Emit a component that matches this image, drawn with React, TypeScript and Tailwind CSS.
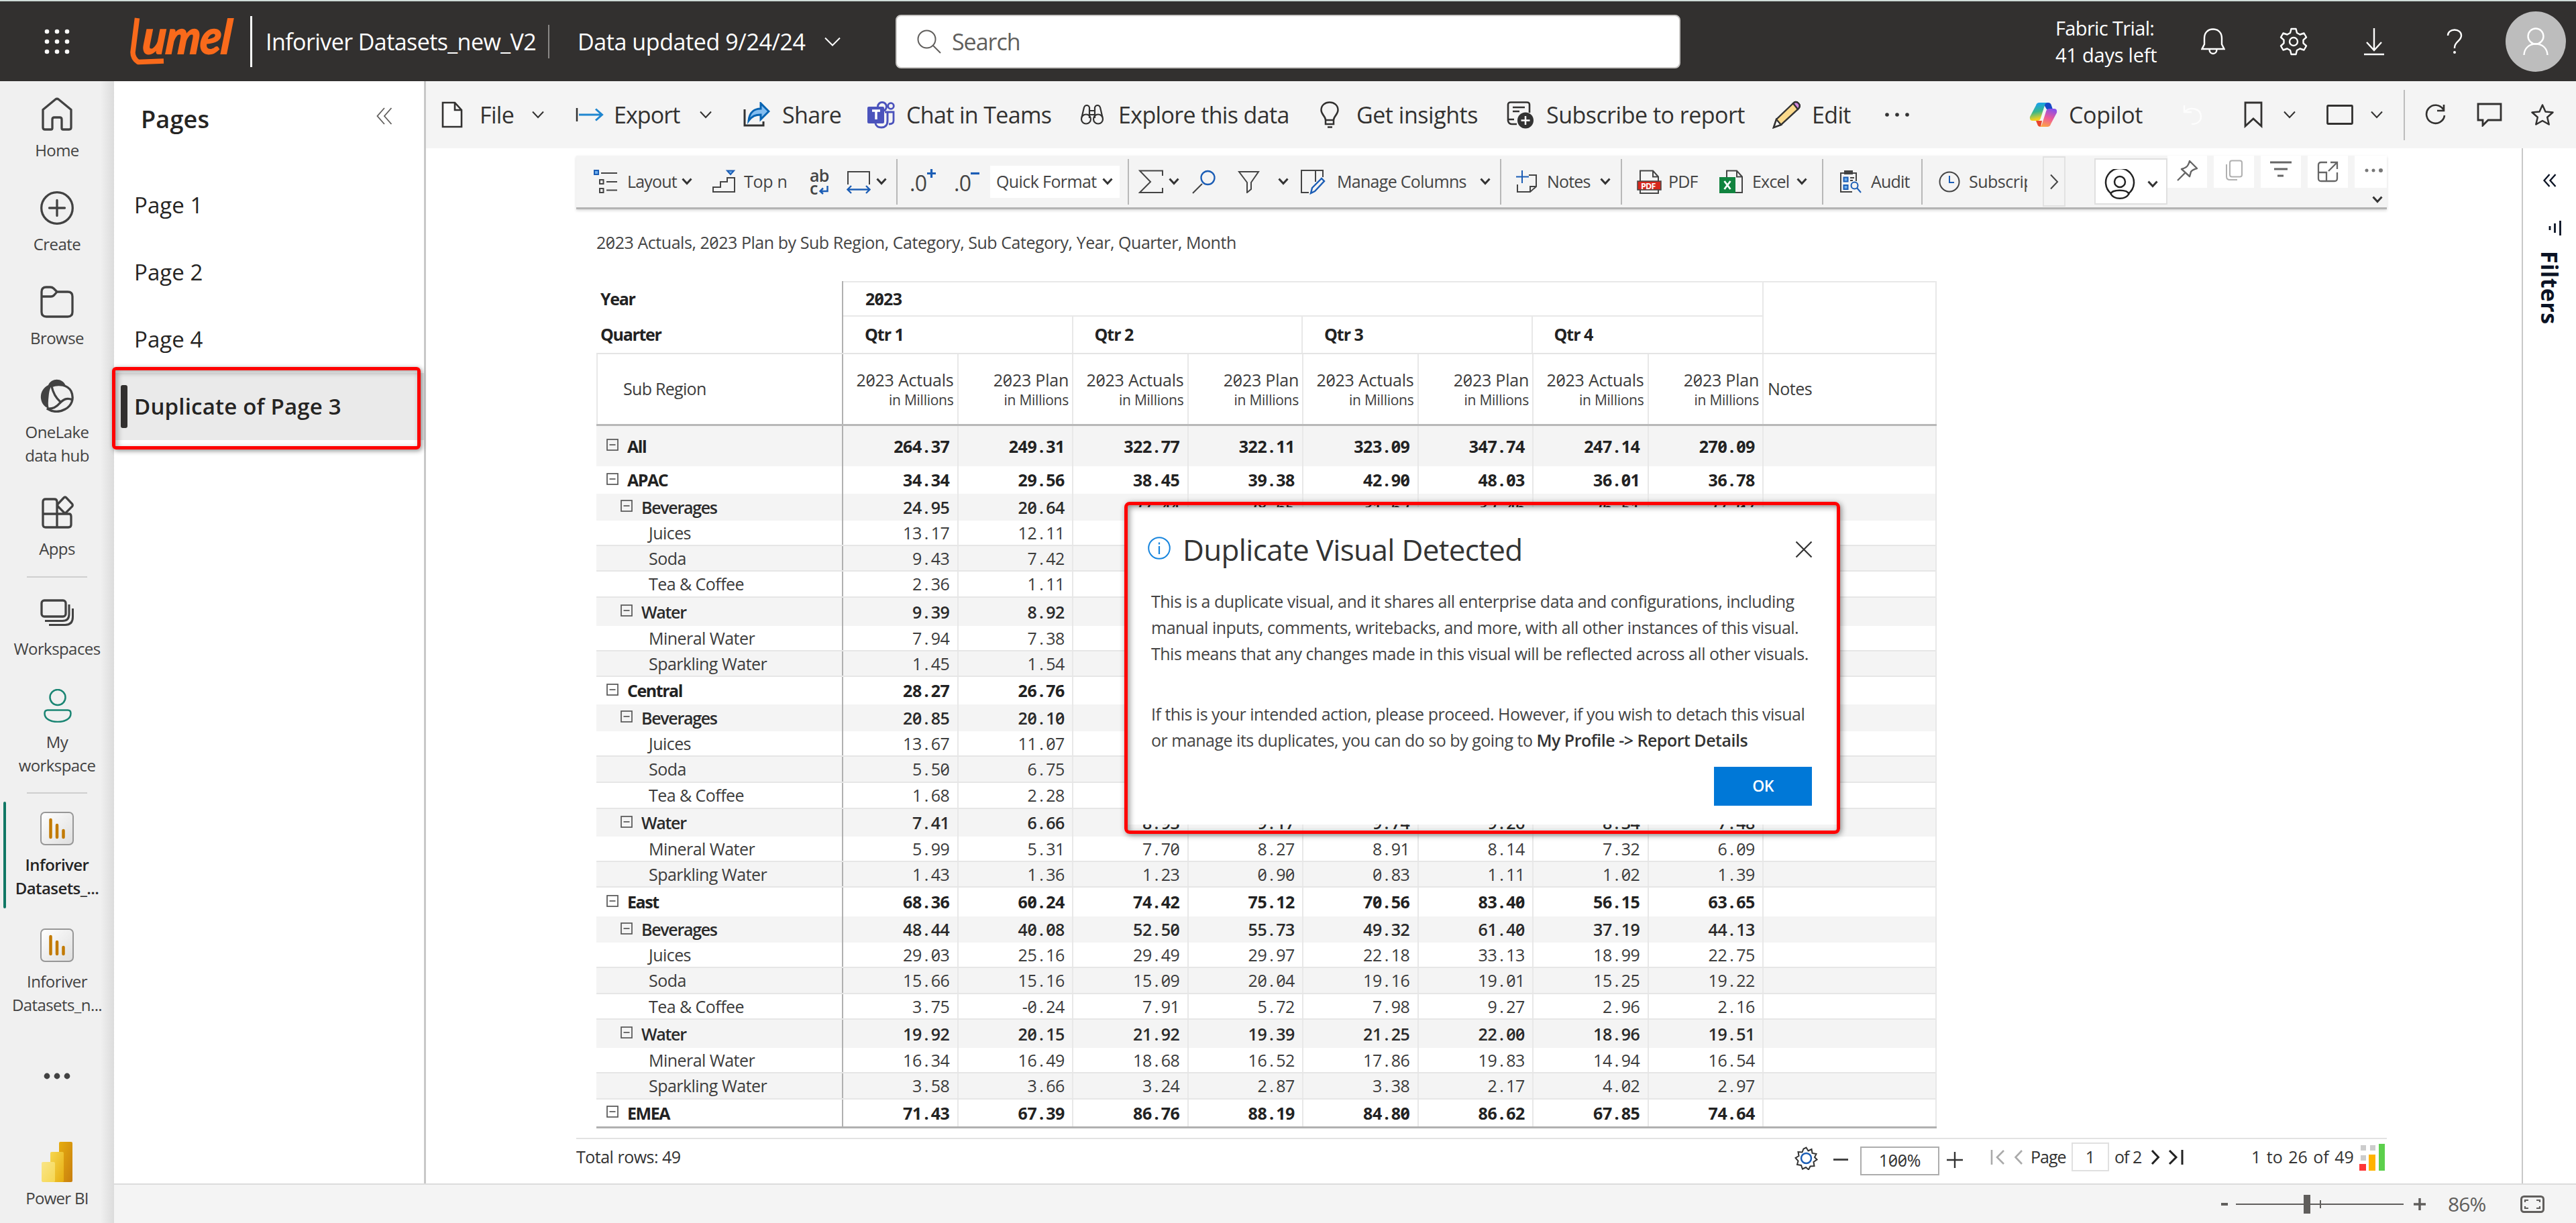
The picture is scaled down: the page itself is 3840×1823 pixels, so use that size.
import type { ReactNode } from "react";

type Kids = { children?: ReactNode };

function Svg({ w, h, className = "", children }: { w: number; h: number; className?: string } & Kids) {
  return (
    <svg
      width={w}
      height={h}
      viewBox={`0 0 ${w} ${h}`}
      fill="none"
      stroke="currentColor"
      strokeWidth={2}
      className={`shrink-0 ${className}`}
    >
      {children}
    </svg>
  );
}

const ChevThin = ({ className = "" }: { className?: string }) => (
  <Svg w={18} h={12} className={className}>
    <path d="M1 1.5l8 8.5 8-8.5" />
  </Svg>
);
const ChevBold = ({ className = "" }: { className?: string }) => (
  <Svg w={16} h={11} className={`text-[#333] ${className}`}>
    <path d="M1.500 1.500L8 8.500l6.500-7" strokeWidth={3} />
  </Svg>
);
const Divider = ({ className = "" }: { className?: string }) => (
  <div className={`h-[68px] w-[2px] shrink-0 bg-[#b8b8b8] ${className}`} />
);
const Label = ({ className = "", children }: { className?: string } & Kids) => (
  <span className={`shrink-0 whitespace-nowrap ${className}`}>{children}</span>
);

/* ---------- top bar ---------- */

function LumelLogo() {
  return (
    <svg width={164} height={84} viewBox="0 0 164 84" className="ml-[89px] shrink-0 overflow-visible">
      <g fill="#f96a1b" stroke="#f96a1b">
        <path d="M11.500 7L5 58q0 9 8 14.500l38-1.500" fill="none" strokeWidth="7.500" strokeLinejoin="round" />
        <text
          transform="translate(18 60) skewX(-5)"
          fontFamily="Lato"
          fontStyle="italic"
          fontWeight="700"
          fontSize="70"
          textLength="132"
          lengthAdjust="spacingAndGlyphs"
          strokeWidth="1.800"
        >
          umel
        </text>
      </g>
    </svg>
  );
}

function TopBar() {
  return (
    <header className="flex h-[121px] shrink-0 items-center border-t-2 border-[#cfdcd8] bg-[#32302f] text-[34px] tracking-[-0.017em] text-white">
      <Svg w={38} h={38} className="ml-[66px]">
        <g fill="white" stroke="none">
          {[4, 19, 34].map((y) => [4, 19, 34].map((x) => <circle key={`${x}-${y}`} cx={x} cy={y} r={3.3} />))}
        </g>
      </Svg>
      <LumelLogo />
      <div className="ml-[16px] h-[76px] w-[3px] bg-white" />
      <Label className="mt-[2px] ml-[20px] w-[405px]">Inforiver Datasets_new_V2</Label>
      <div className="ml-[16px] h-[50px] w-[2px] bg-[#8a8886]" />
      <Label className="mt-[2px] ml-[42px] w-[346px] tracking-[-0.012em]">Data updated 9/24/24</Label>
      <Svg w={24} h={14} className="ml-[22px]">
        <path d="M1 1.500l11 11 11-11" />
      </Svg>
      <div className="ml-[82px] flex h-[80px] w-[1170px] items-center rounded-[8px] border-2 border-[#c8c6c4] bg-white text-[#605e5c]">
        <Svg w={36} h={36} className="ml-[30px]">
          <circle cx={14.500} cy={14.500} r={13} />
          <path d="M24 24l11 11" />
        </Svg>
        <Label className="mt-[2px] ml-[16px] tracking-[-0.03em]">Search</Label>
      </div>
      <div className="ml-[559px] w-[165px] whitespace-nowrap text-[29px] leading-[40px] tracking-[-0.022em]">
        Fabric Trial:
        <br />
        <span className="tracking-[-0.008em]">41 days left</span>
      </div>
      <Svg w={36} h={40} className="ml-[52px]">
        <path
          d="M18 1.500C10 1.500 5 7 5 15v9L1.500 31h33L31 24v-9C31 7 26 1.500 18 1.500zM12.500 31.500c0 4 2.500 6.500 5.500 6.500s5.500-2.500 5.500-6.500"
          strokeWidth={2.400}
        />
      </Svg>
      <Svg w={42} h={42} className="ml-[81px]">
        <path
          d="M17.500 2h7l1.500 6 4.500 2.500 6-2 3.500 6-4.500 4.200v4.600l4.500 4.200-3.500 6-6-2L26 34l-1.500 6h-7L16 34l-4.500-2.500-6 2-3.500-6 4.500-4.200v-4.600L2 14.500l3.500-6 6 2L16 8z"
          strokeWidth={2.400}
          strokeLinejoin="round"
        />
        <circle cx={21} cy={21} r={6} strokeWidth={2.400} />
      </Svg>
      <Svg w={32} h={42} className="ml-[83px]">
        <path d="M16 1v32M5 22l11 12 11-12M1 40h30" strokeWidth={2.400} />
      </Svg>
      <Svg w={24} h={38} className="ml-[92px]">
        <path d="M2 10C2 5 6 1.500 12 1.500S22 5 22 10c0 8-10 9-10 18v1" strokeWidth={2.400} />
        <circle cx={12} cy={35} r={2} fill="white" stroke="none" />
      </Svg>
      <div className="ml-[64px] flex size-[90px] items-center justify-center rounded-full bg-[#bdbdbd]">
        <Svg w={38} h={42}>
          <circle cx={19} cy={13} r={11.500} strokeWidth={2.400} />
          <path d="M1.500 41C2 31 9 24.500 19 24.500S36 31 36.500 41" strokeWidth={2.400} />
        </Svg>
      </div>
    </header>
  );
}

/* ---------- left navigation ---------- */

function NavItem({ icon, lines, className = "", text = "" }: { icon: ReactNode; lines: string[]; className?: string; text?: string }) {
  return (
    <div className={`flex w-[170px] flex-col items-center ${className}`}>
      <div className="mb-[11px] flex h-[50px] items-center justify-center">{icon}</div>
      {lines.map((l) => (
        <div key={l} className={`whitespace-nowrap text-[24px] leading-[35px] tracking-[-0.024em] ${text}`}>
          {l}
        </div>
      ))}
    </div>
  );
}

function ReportIcon({ id }: { id: string }) {
  return (
    <Svg w={50} h={50}>
      <defs>
        <linearGradient id={id} x1="0" y1="0" x2="1" y2="1">
          <stop offset="0" stopColor="#ffffff" />
          <stop offset="1" stopColor="#dedede" />
        </linearGradient>
      </defs>
      <rect x={1} y={1} width={48} height={48} rx={6} fill={`url(#${id})`} stroke="#979797" />
      <path d="M15.500 12v26M25 20v18M34.500 28v10" stroke="#c27a00" strokeWidth={4.500} strokeLinecap="round" />
    </Svg>
  );
}

function NavRail() {
  return (
    <nav className="flex w-[170px] shrink-0 flex-col items-center bg-gradient-to-r from-[#f0f0f0] from-88% to-[#dcdcdc] text-[#424242]">
      <NavItem
        className="mt-[24px]"
        lines={["Home"]}
        icon={
          <Svg w={46} h={50}>
            <path
              d="M2 18.500L20.500 3.200q2.500-2 5 0L44 18.500V45q0 3-3 3H32q-2 0-2-2V33q0-3-3-3h-8q-3 0-3 3v13q0 2-2 2H5q-3 0-3-3z"
              strokeWidth={3.300}
              strokeLinejoin="round"
            />
          </Svg>
        }
      />
      <NavItem
        className="mt-[44px]"
        lines={["Create"]}
        icon={
          <Svg w={50} h={50}>
            <circle cx={25} cy={25} r={23.300} strokeWidth={3.300} />
            <path d="M25 13.500v23M13.500 25h23" strokeWidth={3.300} strokeLinecap="round" />
          </Svg>
        }
      />
      <NavItem
        className="mt-[44px]"
        lines={["Browse"]}
        icon={
          <Svg w={50} h={48}>
            <path
              d="M2 9q0-7 7-7h6q3 0 5 2l5 5h16q7 0 7 7v23q0 7-7 7H9q-7 0-7-7zM2 16h14q2.500 0 4-1.500L25 9"
              strokeWidth={3.300}
            />
          </Svg>
        }
      />
      <NavItem
        className="mt-[44px]"
        lines={["OneLake", "data hub"]}
        icon={
          <Svg w={50} h={50}>
            <path
              d="M12 9C4 13 0 21 1 29c1 8 6 13 12 15-2-6-1-12-.500-18C13 20 14 14 17 10c8-3 15-2 21 0C33-2 17-2 12 9z"
              fill="currentColor"
              stroke="none"
            />
            <path
              d="M16 11C28 6 41 9 46 18c5 11 1 22-9 27-9 5-19 4-27-1 8 1 14-2 19-8 5-5 10-9 19-5M17 11c2 9 6 17 13 23"
              strokeWidth={3.300}
            />
          </Svg>
        }
      />
      <NavItem
        className="mt-[43px]"
        lines={["Apps"]}
        icon={
          <Svg w={50} h={50}>
            <path
              d="M4 28V9q0-4 4-4h13q4 0 4 4v38M4 27h39q3 0 3 4v12q0 4-4 4H8q-4 0-4-4V27M35.500 2.500L26.500 12q-1.500 2 0 4l9 9q1.500 1 3 0l9-9q1.500-2 0-4l-9-9.500q-1.500-1-3 0z"
              strokeWidth={3.300}
            />
          </Svg>
        }
      />
      <div className="mt-[24px] h-[2px] w-[90px] bg-[#cfcfcf]" />
      <NavItem
        className="mt-[27px]"
        lines={["Workspaces"]}
        icon={
          <Svg w={50} h={44}>
            <rect x={2} y={4} width={36} height={24} rx={4} strokeWidth={3.300} />
            <path d="M7 34.500h26q10 0 10-10V10M13 40.500h24q11.500 0 11.500-12V16" strokeWidth={3} />
          </Svg>
        }
      />
      <NavItem
        className="mt-[43px]"
        lines={["My", "workspace"]}
        icon={
          <Svg w={42} h={50} className="ml-[2px] text-[#1a8573]">
            <circle cx={21} cy={12.500} r={11.500} strokeWidth={2.500} />
            <path d="M6 31.500h30q4.500 0 4.500 5C40.500 45 31 49 21 49S1.500 45 1.500 36.500q0-5 4.500-5z" strokeWidth={2.500} />
          </Svg>
        }
      />
      <div className="mt-[23px] h-[2px] w-[90px] bg-[#cfcfcf]" />
      <div className="mt-[12px] flex h-[159px] w-[170px] pl-[5px]">
        <div className="h-full w-[4px] shrink-0 rounded-full bg-[#117865]" />
        <NavItem
          className="-ml-[9px] pt-[15px]"
          text="font-semibold text-[#242424]"
          lines={["Inforiver", "Datasets_..."]}
          icon={<ReportIcon id="report-a" />}
        />
      </div>
      <NavItem className="mt-[30px]" lines={["Inforiver", "Datasets_n..."]} icon={<ReportIcon id="report-b" />} />
      <Svg w={40} h={10} className="mt-[84px]">
        <g fill="currentColor" stroke="none">
          <circle cx={5} cy={5} r={4.400} />
          <circle cx={20} cy={5} r={4.400} />
          <circle cx={35} cy={5} r={4.400} />
        </g>
      </Svg>
      <div className="mt-[93px] flex flex-col items-center">
        <Svg w={46} h={62}>
          <defs>
            <linearGradient id="pb1" x1="0" y1="0" x2="1" y2="1">
              <stop stopColor="#e6ad10" />
              <stop offset="1" stopColor="#c87e0e" />
            </linearGradient>
            <linearGradient id="pb2" x1="0" y1="0" x2="1" y2="1">
              <stop stopColor="#f6d751" />
              <stop offset="1" stopColor="#e6ad10" />
            </linearGradient>
            <linearGradient id="pb3" x1="0" y1="0" x2="1" y2="1">
              <stop stopColor="#f9e589" />
              <stop offset="1" stopColor="#f6d751" />
            </linearGradient>
          </defs>
          <g stroke="none">
            <rect x={26} y={0} width={20} height={60} rx={2} fill="url(#pb1)" />
            <rect x={13} y={15} width={20} height={45} rx={2} fill="url(#pb2)" />
            <rect x={0} y={30} width={20} height={30} rx={2} fill="url(#pb3)" />
          </g>
        </Svg>
        <div className="mt-[4px] whitespace-nowrap text-[24px] leading-[35px] tracking-[-0.03em]">Power BI</div>
      </div>
    </nav>
  );
}

/* ---------- pages pane ---------- */

function PagesPane() {
  return (
    <aside className="flex w-[465px] shrink-0 flex-col border-r-[3px] border-[#c8c8c8] bg-white text-[#252423]">
      <div className="flex items-start pt-[32px]">
        <h2 className="ml-[40px] h-[50px] w-[104px] text-[36px] leading-[50px] font-semibold tracking-[0.006em]">Pages</h2>
        <Svg w={24} h={26} className="mt-[7px] ml-[247px] text-[#605e5c]">
          <path d="M12 1L1.500 13 12 25M22.500 1L12 13l10.500 12" strokeWidth={1.800} />
        </Svg>
      </div>
      <div className="mt-[53px] flex flex-col">
        {["Page 1", "Page 2", "Page 4"].map((p) => (
          <div key={p} className="flex h-[100px] items-center pb-[1px] pl-[30px] text-[33px] tracking-[0.002em]">
            {p}
          </div>
        ))}
        <div className="relative flex h-[100px] items-center bg-[#eaeaea] text-[33px] font-semibold">
          <div className="ml-[10px] h-[64px] w-[10px] rounded-[3px] bg-[#32302f]" />
          <div className="ml-[10px] whitespace-nowrap tracking-[0.006em]">Duplicate of Page 3</div>
          <div className="absolute -top-[9px] -left-[3px] h-[123px] w-[460px] rounded-[6px] border-[5px] border-[#ff0000] shadow-[2px_2px_7px_rgba(0,0,0,0.45),inset_3px_3px_8px_rgba(0,0,0,0.35)]" />
        </div>
      </div>
    </aside>
  );
}

/* ---------- command bar ---------- */

function CommandBar() {
  return (
    <div className="flex h-[100px] shrink-0 items-center bg-[#f4f4f4] text-[34px] tracking-[-0.019em] text-[#323130]">
      <Svg w={32} h={40} className="ml-[23px]">
        <path d="M2 2h18l10 11v25H2zM20 2v11h10" strokeWidth={2.600} fill="#fafafa" />
      </Svg>
      <Label className="ml-[25px] w-[54px]">File</Label>
      <ChevThin className="ml-[24px]" />
      <Svg w={42} h={20} className="ml-[47px]">
        <path d="M2 0v20" strokeWidth={2.500} />
        <path d="M5 10h34M30 1.500l9.500 8.500-9.500 8.500" stroke="#1f86cf" strokeWidth={3} />
      </Svg>
      <Label className="ml-[15px] w-[104px] tracking-[-0.027em]">Export</Label>
      <ChevThin className="ml-[24px]" />
      <Svg w={40} h={38} className="ml-[47px]">
        <path d="M2 11v24h28v-6" strokeWidth={3} stroke="#333" />
        <path d="M8 28C9 15 17 10 26 10V2l12 12-12 12v-7c-8 0-13 2-18 9z" fill="#83bdf0" stroke="#0763b1" strokeWidth={3} />
      </Svg>
      <Label className="ml-[18px] w-[88px]">Share</Label>
      <Svg w={41} h={41} className="ml-[39px] text-[#4b53bc]">
        <circle cx={22} cy={8} r={6.500} strokeWidth={3} />
        <circle cx={35} cy={7} r={4.300} strokeWidth={2.800} />
        <path d="M26 16h13v13q0 5-7 5" strokeWidth={2.800} />
        <path d="M30 16v13c0 7-4 10-9 10s-8-2-9-6" strokeWidth={3} />
        <rect x={0} y={8} width={25} height={25} rx={2} fill="currentColor" stroke="none" />
        <path d="M7 14h12M13 14v13" stroke="white" strokeWidth={3.500} />
      </Svg>
      <Label className="ml-[17px] w-[216px]">Chat in Teams</Label>
      <Svg w={34} h={30} className="ml-[44px]">
        <g strokeWidth={2.200}>
          <circle cx={8} cy={21.500} r={7} />
          <circle cx={26} cy={21.500} r={7} />
          <path d="M1.500 19L5 4q1-3 4-3t4 3v16M32.500 19L29 4q-1-3-4-3t-4 3v16M13 9h8M13 15h8" />
        </g>
      </Svg>
      <Label className="ml-[22px] w-[258px]">Explore this data</Label>
      <Svg w={28} h={40} className="ml-[43px]">
        <path d="M8 28C8 22 1.500 20 1.500 13 1.500 6 7 1.500 14 1.500S26.500 6 26.500 13c0 7-6.500 9-6.500 15zM8 28v6h12v-6M11 38.500h7" strokeWidth={2.500} />
      </Svg>
      <Label className="ml-[26px] w-[184px] tracking-[-0.014em]">Get insights</Label>
      <Svg w={41} h={41} className="ml-[40px]">
        <path d="M15 34H8q-5 0-6-5V5q0-3.500 4-3.500h24q4 0 4 3.500v12M9 9h18M9 15h10M2 27h9" strokeWidth={2.600} />
        <circle cx={28} cy={28.500} r={12} fill="#333" stroke="none" />
        <path d="M28 22v13M21.500 28.500h13" stroke="white" strokeWidth={2.500} />
      </Svg>
      <Label className="ml-[18px] w-[300px] tracking-[-0.015em]">Subscribe to report</Label>
      <Svg w={42} h={42} className="ml-[37px]">
        <path d="M2 40l4-12L31 4q4-4 8 0t-1 9L13 36z" fill="#fbd98b" strokeWidth={2.400} stroke="#333" />
        <path d="M31 4q4-4 8 0t-1 9z" fill="#d58ae0" stroke="#333" strokeWidth={2.400} />
        <path d="M2 40l4-12 7 8z" fill="#fff" stroke="#333" strokeWidth={2.400} />
      </Svg>
      <Label className="ml-[17px] w-[60px]">Edit</Label>
      <Svg w={38} h={8} className="ml-[48px]">
        <g fill="#333" stroke="none">
          <circle cx={4} cy={4} r={2.800} />
          <circle cx={19} cy={4} r={2.800} />
          <circle cx={34} cy={4} r={2.800} />
        </g>
      </Svg>
      <Svg w={42} h={38} className="ml-[178px]">
        <defs>
          <linearGradient id="cp1" x1="0" y1="0" x2="0.200" y2="1">
            <stop offset="0.100" stopColor="#18a0f0" />
            <stop offset="0.550" stopColor="#38b68c" />
            <stop offset="0.950" stopColor="#f0d020" />
          </linearGradient>
          <linearGradient id="cp2" x1="0.600" y1="0" x2="0.300" y2="1">
            <stop stopColor="#8a50e8" />
            <stop offset="0.500" stopColor="#ee5a98" />
            <stop offset="1" stopColor="#fda544" />
          </linearGradient>
        </defs>
        <g stroke="none">
          <path d="M20 1h8q4 0 5 4l2 6h-9z" fill="#1848c8" />
          <path d="M10 5q1-4 5-4h13q-4 0-5 4l-6 19q-1 4-5 4H5q-5 0-4-6z" fill="url(#cp1)" />
          <path d="M10 28h9l-2 9q-4 0-5-4z" fill="#e8452c" />
          <path d="M32 33q-1 4-5 4H14q4 0 5-4l6-19q1-4 5-4h7q5 0 4 6z" fill="url(#cp2)" />
        </g>
      </Svg>
      <Label className="ml-[17px] w-[116px] tracking-[-0.010em]">Copilot</Label>
      <Svg w={30} h={30} className="ml-[53px] text-[#fdfdfd]">
        <path d="M3 1v10h11M4 10C12 3 28 5 28 18c0 7-6 11-14 11" strokeWidth={2.400} />
      </Svg>
      <Svg w={28} h={40} className="ml-[62px]">
        <path d="M2 2h24v35l-12-11L2 37z" strokeWidth={2.800} />
      </Svg>
      <ChevThin className="ml-[31px]" />
      <Svg w={40} h={30} className="ml-[46px]">
        <rect x={1.500} y={1.500} width={37} height={27} rx={1} strokeWidth={2.800} />
      </Svg>
      <ChevThin className="ml-[26px]" />
      <div className="ml-[31px] h-[75px] w-[2px] bg-[#bdbdbd]" />
      <Svg w={32} h={32} className="ml-[29px]">
        <path d="M28 8a13.500 13.500 0 1 0 2 9M29 1v9H19" strokeWidth={2.600} />
      </Svg>
      <Svg w={38} h={36} className="ml-[46px]">
        <path d="M2 2h34v24H17l-8 8v-8H2z" strokeWidth={2.800} />
      </Svg>
      <Svg w={34} h={34} className="ml-[43px]">
        <path d="M17 2.500l4.500 10 11 1-8.300 7.300 2.500 10.700L17 26l-9.700 5.500 2.500-10.700L1.500 13.500l11-1z" strokeWidth={2.500} strokeLinejoin="round" />
      </Svg>
    </div>
  );
}

/* ---------- visual toolbar ---------- */

const BLUE = "#1b5db5";

function VisualToolbar() {
  return (
    <div className="flex h-[80px] w-[2699px] shrink-0 items-center border-b-[3px] border-[#b4b4b4] bg-[#f4f4f4] text-[25px] tracking-[-0.032em] text-[#444] shadow-[0_2px_4px_rgba(0,0,0,0.15)]">
      <Svg w={36} h={36} className="ml-[26px]">
        <rect x={1} y={1} width={6} height={6} fill="#6fb0ee" stroke={BLUE} />
        <path d="M11 5h24M19 18h16M19 30.500h16" />
        <rect x={9} y={15} width={5.500} height={6} />
        <rect x={9} y={28} width={5.500} height={6} />
      </Svg>
      <Label className="ml-[14px] w-[77px]">Layout</Label>
      <ChevBold className="ml-[4px]" />
      <Svg w={35} h={36} className="ml-[30px]">
        <path d="M1 33v-7h11v-8h10v-6h11v21z" />
        <path d="M22 1.500h10l-5 5.500z" stroke={BLUE} fill="#6fb0ee" />
      </Svg>
      <Label className="ml-[12px] w-[64px] tracking-[-0.010em]">Top n</Label>
      <div className="ml-[34px] w-[29px] text-[25px] leading-[19px] font-semibold">
        ab
        <div className="flex items-end">
          c
          <Svg w={14} h={13} className="ml-[2px]">
            <path d="M12.500 0v8H2M6 3.500L1.500 8 6 12" stroke={BLUE} strokeWidth={2.500} />
          </Svg>
        </div>
      </div>
      <Svg w={36} h={36} className="ml-[26px]">
        <path d="M2 22V3h32v19" />
        <path d="M3 29.500h30M7 24l-5.500 5.500L7 35M29 24l5.500 5.500L29 35" stroke={BLUE} strokeWidth={2.300} />
      </Svg>
      <ChevBold className="ml-[8px]" />
      <Divider className="ml-[14px]" />
      <div className="ml-[18px] flex w-[40px] items-start text-[32px] leading-[36px]">
        <span className="pt-[4px] tracking-[-0.020em]">.0</span>
        <Svg w={15} h={16}>
          <path d="M7.500 1v13M1 7.500h13" stroke={BLUE} strokeWidth={3.200} />
        </Svg>
      </div>
      <div className="ml-[26px] flex w-[40px] items-start text-[32px] leading-[36px]">
        <span className="pt-[4px] tracking-[-0.020em]">.0</span>
        <Svg w={13} h={16}>
          <path d="M0 7.500h13" stroke={BLUE} strokeWidth={3.200} />
        </Svg>
      </div>
      <div className="ml-[14px] flex h-[48px] w-[193px] items-center bg-white">
        <Label className="ml-[9px] w-[152px] tracking-[-0.024em]">Quick Format</Label>
        <ChevBold className="ml-[6px]" />
      </div>
      <Divider className="ml-[12px]" />
      <Svg w={38} h={36} className="ml-[14px]">
        <path d="M36 9V1.500H2L18 18 2 34h34v-7" />
      </Svg>
      <ChevBold className="ml-[7px]" />
      <Svg w={36} h={36} className="ml-[19px]">
        <path d="M15 21L1 35" />
        <circle cx={23.500} cy={12} r={10} stroke={BLUE} strokeWidth={2.300} />
      </Svg>
      <Svg w={33} h={34} className="ml-[32px]">
        <path d="M2 2h29L20 18v10l-6 5V18z" />
      </Svg>
      <ChevBold className="ml-[27px]" />
      <Svg w={38} h={38} className="ml-[17px]">
        <path d="M13 35H2V2h32v10M23 2v17" />
        <path d="M16 36l2-8L32 14l4 4-14 15z" stroke={BLUE} strokeWidth={2.400} />
      </Svg>
      <Label className="ml-[17px] w-[197px] tracking-[-0.028em]">Manage Columns</Label>
      <ChevBold className="ml-[16px]" />
      <Divider className="ml-[14px]" />
      <Svg w={32} h={34} className="ml-[22px]">
        <path d="M2 21v11h19l9-8V7H19M21 32v-8h9" />
        <path d="M9 0v19M0 9.500h19" stroke={BLUE} />
      </Svg>
      <Label className="ml-[14px] w-[68px]">Notes</Label>
      <ChevBold className="ml-[11px]" />
      <Divider className="ml-[15px]" />
      <Svg w={38} h={36} className="ml-[22px]">
        <path d="M5 35V1.500h19l8 9V35zM24 1.500v9h8" />
        <rect x={1} y={17} width={35} height={13} fill="#d6281d" strokeWidth={1.500} />
        <text x={6} y={28.500} fontSize={12.500} fontWeight={700} fontFamily="Open Sans" fill="white" stroke="none">
          PDF
        </text>
      </Svg>
      <Label className="ml-[9px] w-[46px]">PDF</Label>
      <Svg w={36} h={36} className="ml-[30px]">
        <path d="M11 12V1.500h15l8 9V34H22M26 1.500v9h8" />
        <rect x={0} y={11} width={24} height={24} fill="#11833f" stroke="none" />
        <path d="M7.500 17l9 12M16.500 17l-9 12" stroke="white" strokeWidth={2.800} />
      </Svg>
      <Label className="ml-[13px] w-[60px]">Excel</Label>
      <ChevBold className="ml-[6px]" />
      <Divider className="ml-[22px]" />
      <Svg w={33} h={34} className="ml-[24px]">
        <path d="M8 4H2v28h17M19 4h6v12" />
        <rect x={8} y={1} width={11} height={4} fill="#444" />
        <rect x={6.500} y={10.500} width={6} height={6} fill="#6fb0ee" stroke={BLUE} />
        <rect x={6.500} y={22} width={6} height={6} fill="#6fb0ee" stroke={BLUE} />
        <path d="M16 11h6M16 15h4" />
        <circle cx={22.500} cy={22.500} r={5} stroke={BLUE} />
        <path d="M26 26l6 7" stroke={BLUE} />
      </Svg>
      <Label className="ml-[14px] w-[62px]">Audit</Label>
      <Divider className="ml-[13px]" />
      <Svg w={32} h={32} className="ml-[24px]">
        <circle cx={16} cy={16} r={14.500} />
        <path d="M16 7v10h7" stroke={BLUE} />
      </Svg>
      <div className="ml-[13px] w-[87px] overflow-hidden whitespace-nowrap tracking-[-0.020em]">Subscription</div>
      <div className="ml-[23px] flex h-[75px] w-[34px] items-center justify-center border-2 border-[#e2e2e2]">
        <Svg w={14} h={24}>
          <path d="M2 1.500L12 12 2 22.500" />
        </Svg>
      </div>
      <div className="ml-[43px] flex h-[69px] w-[109px] items-center border-2 border-[#e0e0e0] bg-white">
        <Svg w={46} h={46} className="mt-[8px] ml-[13px] text-[#222]">
          <path d="M10 36.500A21 21 0 1 1 36 36.500" strokeWidth={2.500} />
          <circle cx={23} cy={19} r={8} strokeWidth={2.500} />
          <path d="M9.500 37C11 30 34 30 36.500 37c-5 9-22 9-27 0z" strokeWidth={2.500} />
        </Svg>
        <ChevBold className="mt-[8px] ml-[18px]" />
      </div>
      <div className="flex h-full w-[327px] flex-col">
        <div className="flex h-[48px] gap-[10px] text-[#666]">
          <div className="flex w-[59px] items-center justify-center bg-white">
            <Svg w={32} h={32} className="-mt-[4px]">
              <path d="M19 2l11 11q-7 2-9 5-1 4-2 7L7 14q4-1 7-3 3-2 5-9zM12 20L1 31" strokeWidth={2.400} strokeLinejoin="round" />
            </Svg>
          </div>
          <div className="flex w-[60px] items-center justify-center bg-white text-[#b0b0b0]">
            <Svg w={28} h={32} className="-mt-[4px]">
              <rect x={8} y={1.500} width={18} height={24} rx={3} />
              <path d="M3 7v18q0 5 5 5h11" />
            </Svg>
          </div>
          <div className="flex w-[60px] items-center justify-center bg-white">
            <Svg w={32} h={24} className="-mt-[8px]">
              <path d="M0 2h32M6 12h20M11 22h9" strokeWidth={2.800} />
            </Svg>
          </div>
          <div className="flex w-[60px] items-center justify-center bg-white">
            <Svg w={32} h={32}>
              <path d="M15 2H6Q2 2 2 6v20q0 4 4 4h20q4 0 4-4v-9M20 2h10v10M30 2L17 15M2 17h12v13" strokeWidth={2.300} />
            </Svg>
          </div>
          <div className="flex flex-1 items-center justify-start bg-white">
            <Svg w={30} h={8} className="-mt-[4px] ml-[14px]">
              <g fill="#777" stroke="none">
                <circle cx={4} cy={4} r={2.500} />
                <circle cx={14} cy={4} r={2.500} />
                <circle cx={25} cy={4} r={3} />
              </g>
            </Svg>
          </div>
        </div>
        <div className="flex flex-1 items-center justify-end pt-[6px] pr-[6px]">
          <ChevBold />
        </div>
      </div>
    </div>
  );
}

/* ---------- data grid ---------- */

type Row = { label: string; level: 0 | 1 | 2; h: string; gray?: boolean; v: string };

const ROWS: Row[] = [
  { label: "All", level: 0, h: "h-[60px]", gray: true, v: "264.37 249.31 322.77 322.11 323.09 347.74 247.14 270.09" },
  { label: "APAC", level: 0, h: "h-[41px]", v: "34.34 29.56 38.45 39.38 42.90 48.03 36.01 36.78" },
  { label: "Beverages", level: 1, h: "h-[40px]", gray: true, v: "24.95 20.64 27.44 28.65 31.62 32.46 26.51 27.07" },
  { label: "Juices", level: 2, h: "h-[38px]", v: "13.17 12.11" },
  { label: "Soda", level: 2, h: "h-[38px]", gray: true, v: "9.43 7.42" },
  { label: "Tea & Coffee", level: 2, h: "h-[39px]", v: "2.36 1.11" },
  { label: "Water", level: 1, h: "h-[42px]", gray: true, v: "9.39 8.92" },
  { label: "Mineral Water", level: 2, h: "h-[38px]", v: "7.94 7.38" },
  { label: "Sparkling Water", level: 2, h: "h-[38px]", gray: true, v: "1.45 1.54" },
  { label: "Central", level: 0, h: "h-[41px]", v: "28.27 26.76" },
  { label: "Beverages", level: 1, h: "h-[40px]", gray: true, v: "20.85 20.10" },
  { label: "Juices", level: 2, h: "h-[38px]", v: "13.67 11.07" },
  { label: "Soda", level: 2, h: "h-[39px]", gray: true, v: "5.50 6.75" },
  { label: "Tea & Coffee", level: 2, h: "h-[39px]", v: "1.68 2.28" },
  { label: "Water", level: 1, h: "h-[41px]", gray: true, v: "7.41 6.66 8.93 9.17 9.74 9.26 8.34 7.48" },
  { label: "Mineral Water", level: 2, h: "h-[38px]", v: "5.99 5.31 7.70 8.27 8.91 8.14 7.32 6.09" },
  { label: "Sparkling Water", level: 2, h: "h-[38px]", gray: true, v: "1.43 1.36 1.23 0.90 0.83 1.11 1.02 1.39" },
  { label: "East", level: 0, h: "h-[43px]", v: "68.36 60.24 74.42 75.12 70.56 83.40 56.15 63.65" },
  { label: "Beverages", level: 1, h: "h-[39px]", gray: true, v: "48.44 40.08 52.50 55.73 49.32 61.40 37.19 44.13" },
  { label: "Juices", level: 2, h: "h-[38px]", v: "29.03 25.16 29.49 29.97 22.18 33.13 18.99 22.75" },
  { label: "Soda", level: 2, h: "h-[39px]", gray: true, v: "15.66 15.16 15.09 20.04 19.16 19.01 15.25 19.22" },
  { label: "Tea & Coffee", level: 2, h: "h-[38px]", v: "3.75 -0.24 7.91 5.72 7.98 9.27 2.96 2.16" },
  { label: "Water", level: 1, h: "h-[42px]", gray: true, v: "19.92 20.15 21.92 19.39 21.25 22.00 18.96 19.51" },
  { label: "Mineral Water", level: 2, h: "h-[38px]", v: "16.34 16.49 18.68 16.52 17.86 19.83 14.94 16.54" },
  { label: "Sparkling Water", level: 2, h: "h-[39px]", gray: true, v: "3.58 3.66 3.24 2.87 3.38 2.17 4.02 2.97" },
  { label: "EMEA", level: 0, h: "h-[40px]", v: "71.43 67.39 86.76 88.19 84.80 86.62 67.85 74.64" },
];

const COLS = [0, 1, 2, 3, 4, 5, 6, 7];

function Num({ value }: { value?: string }) {
  if (!value) return null;
  const [a, b] = value.split(".");
  return (
    <span className="tracking-[-0.400px]">
      {a}
      <span className="inline-block w-[13.900px] text-center">.</span>
      {b}
    </span>
  );
}

const Toggle = () => (
  <Svg w={18} h={18} className="-mt-[5px] text-[#555]">
    <rect x={1} y={1} width={16} height={16} strokeWidth={1.700} />
    <path d="M4.500 9h9" strokeWidth={1.700} />
  </Svg>
);

const WEIGHT = ["font-bold text-[#222]", "font-semibold text-[#2a2a2a]", "text-[#3c3c3c]"];
const TRACK = ["tracking-[-0.058em]", "tracking-[-0.052em]", "tracking-[-0.022em]"];
const INDENT = ["pl-[15px]", "pl-[36px]", "pl-[78px]"];

function GridRow({ row }: { row: Row }) {
  const vals = row.v.split(" ");
  return (
    <div
      className={`flex ${row.h} ${row.gray ? "bg-[#f4f4f4]" : "bg-white"} ${WEIGHT[row.level]} ${
        row.level === 2 ? "border-b-2 border-[#e6e6e6]" : ""
      }`}
    >
      <div className={`flex w-[368px] items-center border-r-2 border-[#b0b0b0] pt-[1px] ${INDENT[row.level]} ${TRACK[row.level]}`}>
        {row.level < 2 && <Toggle />}
        <span className={row.level < 2 ? "ml-[13px]" : ""}>{row.label}</span>
      </div>
      {COLS.map((c) => (
        <div key={c} className="flex w-[171.500px] items-center justify-end border-r-2 border-[#e8e8e8] pt-[1px] pr-[11px]">
          <Num value={vals[c]} />
        </div>
      ))}
    </div>
  );
}

function DataGrid() {
  return (
    <div className="ml-[30px] flex w-[1998px] flex-col border-b-[3px] border-[#b0b0b0] text-[25px] slashed-zero">
      <div className="flex h-[107px] font-bold tracking-[-0.053em] text-[#222]">
        <div className="w-[368px] border-r-2 border-[#b0b0b0] pl-[6px]">
          <div className="flex h-[53px] items-center">Year</div>
          <div className="flex h-[54px] items-center">Quarter</div>
        </div>
        <div className="w-[1372px] border-t-2 border-r-2 border-[#e8e8e8]">
          <div className="flex h-[51px] items-center border-b-2 border-[#e8e8e8] pl-[33px] tracking-[-0.030em]">2023</div>
          <div className="flex h-[54px] tracking-[-0.042em]">
            {["Qtr 1", "Qtr 2", "Qtr 3", "Qtr 4"].map((q, i) => (
              <div key={q} className={`flex w-[343px] items-center pb-[1px] pl-[32px] ${i < 3 ? "border-r-2 border-[#e8e8e8]" : ""}`}>
                {q}
              </div>
            ))}
          </div>
        </div>
        <div className="w-[258px] border-t-2 border-r-2 border-[#e8e8e8]" />
      </div>
      <div className="flex h-[109px] border-t-2 border-b-[3px] border-t-[#e4e4e4] border-b-[#b8b8b8] text-[#3c3c3c]">
        <div className="flex w-[368px] items-center border-r-2 border-l-2 border-r-[#b0b0b0] border-l-[#e8e8e8] pl-[38px] tracking-[-0.028em]">
          Sub Region
        </div>
        {COLS.map((c) => (
          <div key={c} className="flex w-[171.500px] flex-col items-end border-r-2 border-[#e8e8e8] pt-[21px] pr-[5px] whitespace-nowrap">
            <div className="leading-[34px] tracking-[-0.009em]">{c % 2 ? "2023 Plan" : "2023 Actuals"}</div>
            <div className="text-[21px] leading-[26px] tracking-[-0.012em]">in Millions</div>
          </div>
        ))}
        <div className="flex w-[258px] items-center border-r-2 border-[#e8e8e8] pl-[6px] tracking-[-0.020em]">Notes</div>
      </div>
      <div className="flex flex-col border-r-2 border-l-2 border-[#e8e8e8]">
        <div className="-ml-[2px] flex flex-col">
          {ROWS.map((r, i) => (
            <GridRow key={i} row={r} />
          ))}
        </div>
      </div>
    </div>
  );
}

/* ---------- visual footer ---------- */

function VisualFooter() {
  return (
    <div className="mt-[14px] flex h-[59px] w-[2699px] items-center border-t-2 border-[#e2e2e2] pb-[4px] text-[25px] text-[#333] slashed-zero">
      <Label className="w-[1816px] tracking-[-0.020em]">Total rows: 49</Label>
      <Svg w={35} h={35} className="mt-[4px]">
        <path
          d="M17.500 1.500l3 5 5-2.500 1 6 6 1-2.500 5 3.500 3.500-5 3.500 1 6-6 .500-2.500 5-4-3.500-5 2.500-2-5.500-6-1 1.500-5.500L1.500 17l5-3-1-6 6 .500 2-5z"
          strokeWidth={2}
        />
        <circle cx={17.500} cy={17.500} r={7.500} stroke={BLUE} strokeWidth={2.500} />
      </Svg>
      <div className="mt-[8px] ml-[23px] h-[3px] w-[22px] bg-[#444]" />
      <div className="mt-[11px] ml-[18px] flex h-[43px] w-[118px] items-center justify-center border-2 border-[#adadad] tracking-[-0.010em]">
        100%
      </div>
      <Svg w={24} h={24} className="mt-[8px] ml-[11px]">
        <path d="M12 0v24M0 12h24" strokeWidth={2.400} />
      </Svg>
      <Svg w={22} h={22} className="ml-[41px] text-[#aaa]">
        <path d="M2 0v22M20 1L10 11l10 10" strokeWidth={2.600} />
      </Svg>
      <Svg w={14} h={22} className="ml-[13px] text-[#aaa]">
        <path d="M12 1L2.500 11 12 21" strokeWidth={2.600} />
      </Svg>
      <Label className="ml-[11px] w-[53px] tracking-[-0.040em]">Page</Label>
      <div className="ml-[8px] flex h-[43px] w-[56px] items-center justify-center border-2 border-[#e0e0e0]">1</div>
      <Label className="ml-[8px] w-[44px] tracking-[-0.040em]">of 2</Label>
      <Svg w={14} h={22} className="ml-[10px] text-[#222]">
        <path d="M2 1l9.500 10L2 21" strokeWidth={3} />
      </Svg>
      <Svg w={24} h={22} className="ml-[12px] text-[#222]">
        <path d="M2 1l10 10L2 21M21 0v22" strokeWidth={3} />
      </Svg>
      <Label className="ml-[100px] w-[160px] tracking-normal [word-spacing:2px]">1 to 26 of 49</Label>
      <Svg w={40} h={40}>
        <g stroke="none">
          <rect x={3} y={2} width={8} height={8} fill="#ccc" />
          <rect x={17} y={2} width={8} height={8} fill="#ccc" />
          <rect x={3} y={17} width={8} height={8} fill="#ccc" />
          <rect x={1} y={30} width={10} height={10} fill="#ff3636" />
          <rect x={15} y={16} width={10} height={24} fill="#ffb300" />
          <rect x={30} y={0} width={9} height={40} fill="#5cd04c" />
        </g>
      </Svg>
    </div>
  );
}

/* ---------- dialog ---------- */

function DuplicateDialog() {
  return (
    <div className="absolute top-[527px] left-[1041px] h-[495px] w-[1067px]">
      <div className="absolute top-[8px] left-[5px] h-[473px] w-[1057px] bg-white text-[25px] text-[#444]">
        <div className="flex items-center pt-[33px] pl-[30px]">
          <Svg w={34} h={34} className="mt-[-4px] text-[#1684dd]">
            <circle cx={17} cy={17} r={15.800} />
            <path d="M17 14v12M17 8.500v3" strokeWidth={2.200} />
          </Svg>
          <h1 className="ml-[18px] w-[910px] text-[44px] leading-[60px] tracking-[-0.015em] whitespace-nowrap text-[#333]">
            Duplicate Visual Detected
          </h1>
          <Svg w={26} h={26} className="ml-[3px] text-[#333]">
            <path d="M1.500 1.500l23 23M24.500 1.500l-23 23" strokeWidth={2.200} />
          </Svg>
        </div>
        <div className="mt-[28px] ml-[35px] leading-[39.200px] tracking-[-0.020em] whitespace-nowrap">
          This is a duplicate visual, and it shares all enterprise data and configurations, including
          <br />
          manual inputs, comments, writebacks, and more, with all other instances of this visual.
          <br />
          This means that any changes made in this visual will be reflected across all other visuals.
        </div>
        <div className="mt-[50px] ml-[35px] leading-[39px] tracking-[-0.020em] whitespace-nowrap">
          If this is your intended action, please proceed. However, if you wish to detach this visual
          <br />
          or manage its duplicates, you can do so by going to{" "}
          <span className="font-semibold text-[#333]">My Profile -&gt; Report Details</span>
        </div>
        <div className="mt-[20px] ml-[874px] flex h-[58px] w-[146px] items-center justify-center bg-[#0078d7] text-[23px] font-semibold tracking-[-0.030em] text-white">
          OK
        </div>
      </div>
      <div className="absolute inset-0 rounded-[8px] border-[5px] border-[#ff0000] shadow-[2px_2px_8px_rgba(0,0,0,0.45),inset_3px_3px_9px_rgba(0,0,0,0.4)]" />
    </div>
  );
}

/* ---------- right filter pane and status bar ---------- */

function FiltersPane() {
  return (
    <aside className="flex w-[81px] shrink-0 flex-col items-center border-l-2 border-[#c8c8c8] bg-white text-[#0b1324]">
      <Svg w={20} h={20} className="mt-[38px]">
        <path d="M9.500 1L1.500 10l8 9M18.500 1l-8 9 8 9" strokeWidth={2.400} />
      </Svg>
      <Svg w={20} h={22} className="mt-[50px] ml-[14px]">
        <path d="M18.500 0v22M10.500 4v14M3 8v6" strokeWidth={2.800} />
      </Svg>
      <div className="mt-[23px] text-[34px] leading-[46px] font-bold tracking-[0.012em] [writing-mode:vertical-rl]">Filters</div>
    </aside>
  );
}

function StatusBar() {
  return (
    <footer className="flex h-[59px] shrink-0 items-center border-t-2 border-[#dcdcdc] bg-[#f4f4f4] text-[30px] text-[#605e5c]">
      <div className="ml-[3141px] h-[4px] w-[10px] bg-[#605e5c]" />
      <div className="ml-[12px] flex h-[28px] w-[250px] items-center">
        <div className="h-[2px] w-[101px] bg-[#605e5c]" />
        <div className="h-[28px] w-[10px] bg-[#605e5c]" />
        <div className="h-[2px] w-[14px] bg-[#605e5c]" />
        <div className="h-[12px] w-[2px] bg-[#605e5c]" />
        <div className="h-[2px] flex-1 bg-[#605e5c]" />
      </div>
      <Svg w={18} h={18} className="ml-[15px]">
        <path d="M9 0v18M0 9h18" strokeWidth={3.500} />
      </Svg>
      <Label className="ml-[33px] w-[62px] tracking-[-0.030em]">86%</Label>
      <Svg w={36} h={26} className="ml-[46px]">
        <rect x={1.500} y={1.500} width={33} height={23} rx={4} strokeWidth={3} />
        <path d="M7 10V7h5M24 7h5v3M7 16v3h5M24 19h5v-3" strokeWidth={2.200} />
      </Svg>
    </footer>
  );
}

export default function App() {
  return (
    <div className="flex h-[1823px] w-[3840px] flex-col overflow-hidden bg-white font-['Open_Sans','Noto_Sans',sans-serif]">
      <TopBar />
      <div className="flex min-h-0 flex-1">
        <NavRail />
        <div className="flex w-[3670px] flex-col">
          <div className="flex min-h-0 flex-1">
            <PagesPane />
            <div className="flex w-[3205px] flex-col">
              <CommandBar />
              <div className="flex min-h-0 flex-1">
                <main className="relative flex w-[3124px] flex-col pt-[11px] pl-[224px]">
                  <VisualToolbar />
                  <div className="h-[107px] pt-[32px] pl-[30px] text-[25px] leading-[34px] tracking-[-0.018em] whitespace-nowrap text-[#444] slashed-zero">
                    2023 Actuals, 2023 Plan by Sub Region, Category, Sub Category, Year, Quarter, Month
                  </div>
                  <DataGrid />
                  <VisualFooter />
                  <DuplicateDialog />
                </main>
                <FiltersPane />
              </div>
            </div>
          </div>
          <StatusBar />
        </div>
      </div>
    </div>
  );
}
